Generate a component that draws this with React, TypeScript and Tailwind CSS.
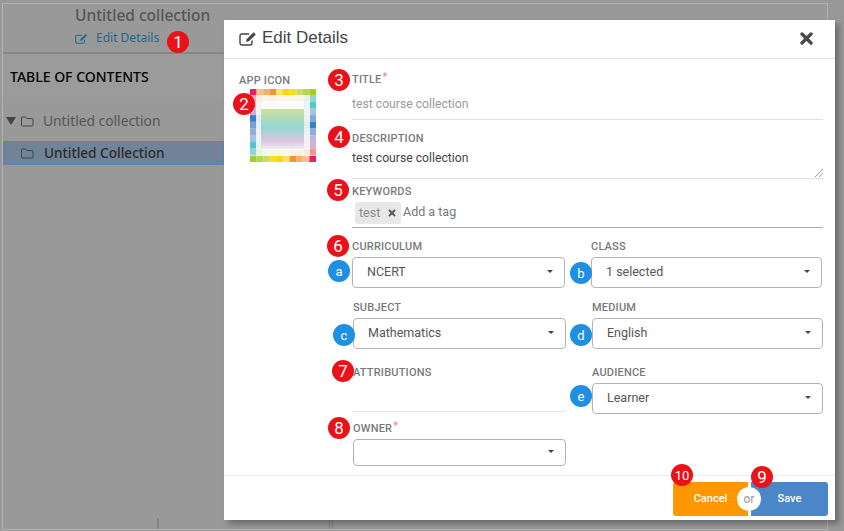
import type { ReactNode } from 'react';

const topColors = ['#e91e63', '#f9c08c', '#f7ae6a', '#f59331', '#ffe26a', '#ffd60a', '#ffdc1c', '#c9dc6b', '#b9d650', '#a6cc28'];
const rightColors = ['#7fd0cf', '#33bfc4', '#8fb8dc', '#6d9bd0', '#0f6fbe', '#7f9fd2', '#b5a8d6', '#c9a5cf', '#f08a8a'];
const leftColors = ['#e8a0b8', '#d3a9cc', '#c9a0cc', '#0f6fbe', '#5f8fcc', '#7f9fd2', '#8fb8dc', '#33bfc4', '#7fd0cf'];
const bottomColors = ['#a6cc28', '#b9d650', '#c9dc6b', '#ffdc1c', '#ffd60a', '#ffe26a', '#f59331', '#f7ae6a', '#f9c08c', '#e91e63'];

function AppIcon() {
  const s = 6.6;
  return (
    <svg width="66" height="73" viewBox="0 0 66 73" className="block">
      <defs>
        <linearGradient id="mid" x1="0" y1="0" x2="0" y2="1">
          <stop offset="0" stopColor="#cfe2a0" />
          <stop offset="0.45" stopColor="#93d6d2" />
          <stop offset="0.8" stopColor="#dcc6e0" />
          <stop offset="1" stopColor="#f1eaf3" />
        </linearGradient>
      </defs>
      <rect width="66" height="73" fill="#fbfbf9" />
      {/* pale inner ring */}
      {topColors.map((c, i) => (
        <rect key={i} x={i * s} y="6" width={s} height="6" fill={c} opacity="0.1" />
      ))}
      {rightColors.map((c, i) => (
        <rect key={i} x="54" y={6 + i * 6.7} width="6" height="6.7" fill={c} opacity="0.1" />
      ))}
      {leftColors.map((c, i) => (
        <rect key={i} x="6" y={6 + i * 6.7} width="6" height="6.7" fill={c} opacity="0.1" />
      ))}
      {bottomColors.map((c, i) => (
        <rect key={i} x={i * s} y="61" width={s} height="6" fill={c} opacity="0.1" />
      ))}
      {topColors.map((c, i) => (
        <rect key={i} x={i * s} y="0" width={s} height="6" fill={c} />
      ))}
      {rightColors.map((c, i) => (
        <rect key={i} x="60" y={6 + i * 6.7} width="6" height="6.7" fill={c} opacity="0.85" />
      ))}
      {leftColors.map((c, i) => (
        <rect key={i} x="0" y={6 + i * 6.7} width="6" height="6.7" fill={c} opacity="0.85" />
      ))}
      {bottomColors.map((c, i) => (
        <rect key={i} x={i * s} y="67" width={s} height="6" fill={c} />
      ))}
      <rect x="11" y="20" width="43" height="40" fill="url(#mid)" />
    </svg>
  );
}

function EditIcon({ w, h, color }: { w: number; h: number; color: string }) {
  return (
    <svg width={w} height={h} viewBox="0 0 18 15" fill="none" stroke={color}>
      <path d="M13 9.5V12a2 2 0 0 1-2 2H3a2 2 0 0 1-2-2V5a2 2 0 0 1 2-2h7" strokeWidth="1.4" />
      <path d="M8 8.2 14.6 1.6l1.8 1.8L9.8 10l-2.3.5z" fill={color} strokeWidth="0.6" />
    </svg>
  );
}

function Badge({ n, className }: { n: string; className: string }) {
  return (
    <div className={`absolute flex h-[22px] w-[22px] items-center justify-center rounded-full bg-[#ea1119] font-['Roboto',sans-serif] leading-none text-white ${className}`}>
      {n}
    </div>
  );
}

function Dot({ n, className }: { n: string; className: string }) {
  return (
    <div className={`absolute flex h-[22px] w-[22px] items-center justify-center rounded-full bg-[#1e8fe1] font-['Roboto',sans-serif] text-[13px] leading-none text-white ${className}`}>
      {n}
    </div>
  );
}

function Label({ children, req }: { children: ReactNode; req?: boolean }) {
  return (
    <div className="h-[12px] text-[11px] leading-[14px] font-medium tracking-[0.2px] text-[#7a7a7a]">
      {children}
      {req && <span className="relative -top-[3px] ml-[1px] text-[#f08a8a]">*</span>}
    </div>
  );
}

function Select({ value, h = 'h-[31px]' }: { value?: string; h?: string }) {
  return (
    <div className={`mt-[5px] flex items-center justify-between rounded-[4px] border border-[#b4b4b4] pb-[1px] pl-[14px] pr-[11px] text-[12.5px] text-[#555] ${h}`}>
      <span>{value}</span>
      <span className="mb-[2px] h-0 w-0 border-x-[3.5px] border-t-[3.5px] border-x-transparent border-t-[#444]" />
    </div>
  );
}

function Folder() {
  return (
    <svg width="13" height="11" viewBox="0 0 13 11" fill="none" stroke="#444" strokeWidth="1">
      <path d="M1.5 1h3.2l1.2 1.5h5.1a1 1 0 0 1 1 1v5.5a1 1 0 0 1-1 1h-9.5a1 1 0 0 1-1-1v-7a1 1 0 0 1 1-1z" />
    </svg>
  );
}

export default function App() {
  return (
    <div className="relative h-[531px] w-[844px] overflow-hidden bg-[#999] font-['Roboto',sans-serif]">
      {/* page behind the dialog */}
      <div className="ml-[2px] mt-[3px] flex h-[527px] w-[826px] flex-col border border-[#b2b2b2] font-['Noto_Sans',sans-serif]">
        <div className="h-[50px] border-b-2 border-[#868686] pl-[72px]">
          <div className="text-[15.5px] leading-[22px] font-medium text-[#555]">Untitled collection</div>
          <div className="mt-[4px] flex items-center gap-[8px] text-[12px] leading-[16px] text-[#1a6a88]">
            <EditIcon w={13} h={11} color="#1a6a88" />
            <span>Edit Details</span>
          </div>
        </div>
        <div className="flex h-[43px] items-center bg-[#9b9b9b] pl-[7px] pt-[2px] text-[14px] font-medium text-black">TABLE OF CONTENTS</div>
        <div className="mt-[13px] flex h-[22px] items-center pl-[3px] text-[13.8px] text-[#555]">
          <span className="h-0 w-0 border-x-[5px] border-t-[8px] border-x-transparent border-t-[#444]" />
          <span className="ml-[5px]"><Folder /></span>
          <span className="ml-[9px]">Untitled collection</span>
        </div>
        <div className="mt-[9px] flex h-[24px] w-[221px] items-center border border-[#5f86b5] bg-[#718398] pl-[17px] text-[13.6px] font-medium text-[#2b2b2b]">
          <Folder />
          <span className="ml-[10px]">Untitled Collection</span>
        </div>
        <div className="mt-auto flex h-[11px] pl-[154px]">
          <span className="w-[2px] bg-[#868686]" />
          <span className="ml-[170px] w-[1px] bg-[#868686]" />
          <span className="ml-[2px] w-[1px] bg-[#868686]" />
        </div>
      </div>

      {/* dialog */}
      <div className="absolute left-[224px] top-[20px] flex h-[500px] w-[611px] flex-col bg-white shadow-[4px_4px_6px_rgba(0,0,0,0.3)]">
        <div className="flex h-[39px] shrink-0 items-center border-b border-[#e4e4e4] pb-[2px] pl-[15px] pr-[22px]">
          <EditIcon w={18} h={15} color="#444" />
          <span className="ml-[5px] font-['Liberation_Sans',sans-serif] text-[17px] text-[#444]">Edit Details</span>
          <svg width="13" height="13" viewBox="0 0 13 13" className="ml-auto">
            <path d="M2 2l9 9M11 2l-9 9" stroke="#4a4a4a" strokeWidth="3.4" strokeLinecap="round" />
          </svg>
        </div>

        <div className="flex min-h-0 flex-1">
          <div className="w-[128px] shrink-0 pl-[15px] pt-[15px]">
            <div className="text-[11px] leading-[14px] font-medium tracking-[0.2px] text-[#7a7a7a]">APP ICON</div>
            <div className="ml-[11px] mt-[1px]"><AppIcon /></div>
          </div>

          <div className="flex-1 pr-[12px] pt-[14px]">
            <Label req>TITLE</Label>
            <div className="flex h-[35px] items-center border-b border-[#e0e0e0] pt-[5px] text-[12.2px] text-[#9a9a9a]">test course collection</div>

            <div className="mt-[12px]"><Label>DESCRIPTION</Label></div>
            <div className="relative h-[35px] border-b border-[#e0e0e0] pt-[7px] text-[12.2px] leading-[15px] text-[#444]">
              test course collection
              <svg width="8" height="8" viewBox="0 0 8 8" className="absolute bottom-[1px] right-0" stroke="#888" strokeWidth="0.8">
                <path d="M0 8L8 0M4 8L8 4" />
              </svg>
            </div>

            <div className="mt-[6px]"><Label>KEYWORDS</Label></div>
            <div className="flex h-[31px] items-start border-b border-[#aaa] pl-[3px] pt-[5px] text-[12.5px]">
              <span className="flex h-[22px] w-[46px] items-center rounded-[3px] bg-[#e8e8e8] pl-[4px] text-[#888]">
                test
                <svg width="8" height="8" viewBox="0 0 8 8" className="ml-[8px]">
                  <path d="M1 1l6 6M7 1l-6 6" stroke="#555" strokeWidth="1.8" />
                </svg>
              </span>
              <span className="ml-[2px] leading-[19px] text-[#777]">Add a tag</span>
            </div>

            <div className="mt-[12px] grid grid-cols-[213px_231px] gap-x-[26px]">
              <div><Label>CURRICULUM</Label><Select value="NCERT" /></div>
              <div><Label>CLASS</Label><Select value="1 selected" /></div>
            </div>

            <div className="ml-px mt-[13px] grid grid-cols-[213px_231px] gap-x-[26px]">
              <div><Label>SUBJECT</Label><Select value="Mathematics" /></div>
              <div><Label>MEDIUM</Label><Select value="English" /></div>
            </div>

            <div className="ml-px mt-[17px] grid grid-cols-[213px_231px] gap-x-[26px]">
              <div>
                <Label>ATTRIBUTIONS</Label>
                <div className="h-[34px] border-b border-[#e4e4e4]" />
                <div className="mt-[10px]"><Label req>OWNER</Label></div>
                <Select h="h-[27px]" />
              </div>
              <div><Label>AUDIENCE</Label><Select value="Learner" /></div>
            </div>
          </div>
        </div>

        <div className="flex h-[45px] shrink-0 items-start justify-end border-t border-[#ececec] pr-[7px] pt-[6px] text-[11px] font-medium text-white">
          <div className="relative flex">
            <button className="h-[34px] w-[75px] rounded-l-[3px] bg-[#ff9800]">Cancel</button>
            <button className="ml-[3px] h-[34px] w-[77px] rounded-r-[3px] bg-[#4a86c8]">Save</button>
            <span className="absolute left-[64px] top-[5px] flex h-[24px] w-[24px] items-center justify-center rounded-full bg-white text-[12px] font-medium text-[#aaa]">or</span>
          </div>
        </div>
      </div>

      {/* numbered callouts laid over the page */}
      <Badge n="1" className="left-[167px] top-[31px] text-[17px]" />
      <Badge n="2" className="left-[233px] top-[93px] text-[17px]" />
      <Badge n="3" className="left-[328px] top-[69px] text-[17px]" />
      <Badge n="4" className="left-[328px] top-[126px] text-[17px]" />
      <Badge n="5" className="left-[327px] top-[179px] text-[17px]" />
      <Badge n="6" className="left-[327px] top-[235px] text-[17px]" />
      <Badge n="7" className="left-[332px] top-[360px] text-[17px]" />
      <Badge n="8" className="left-[328px] top-[417px] text-[17px]" />
      <Badge n="10" className="left-[671px] top-[464px] text-[13px]" />
      <Badge n="9" className="left-[751px] top-[466px] text-[17px]" />
      <Dot n="a" className="left-[328px] top-[260px]" />
      <Dot n="b" className="left-[570px] top-[262px]" />
      <Dot n="c" className="left-[333px] top-[324px]" />
      <Dot n="d" className="left-[570px] top-[324px]" />
      <Dot n="e" className="left-[570px] top-[385px]" />
    </div>
  );
}
